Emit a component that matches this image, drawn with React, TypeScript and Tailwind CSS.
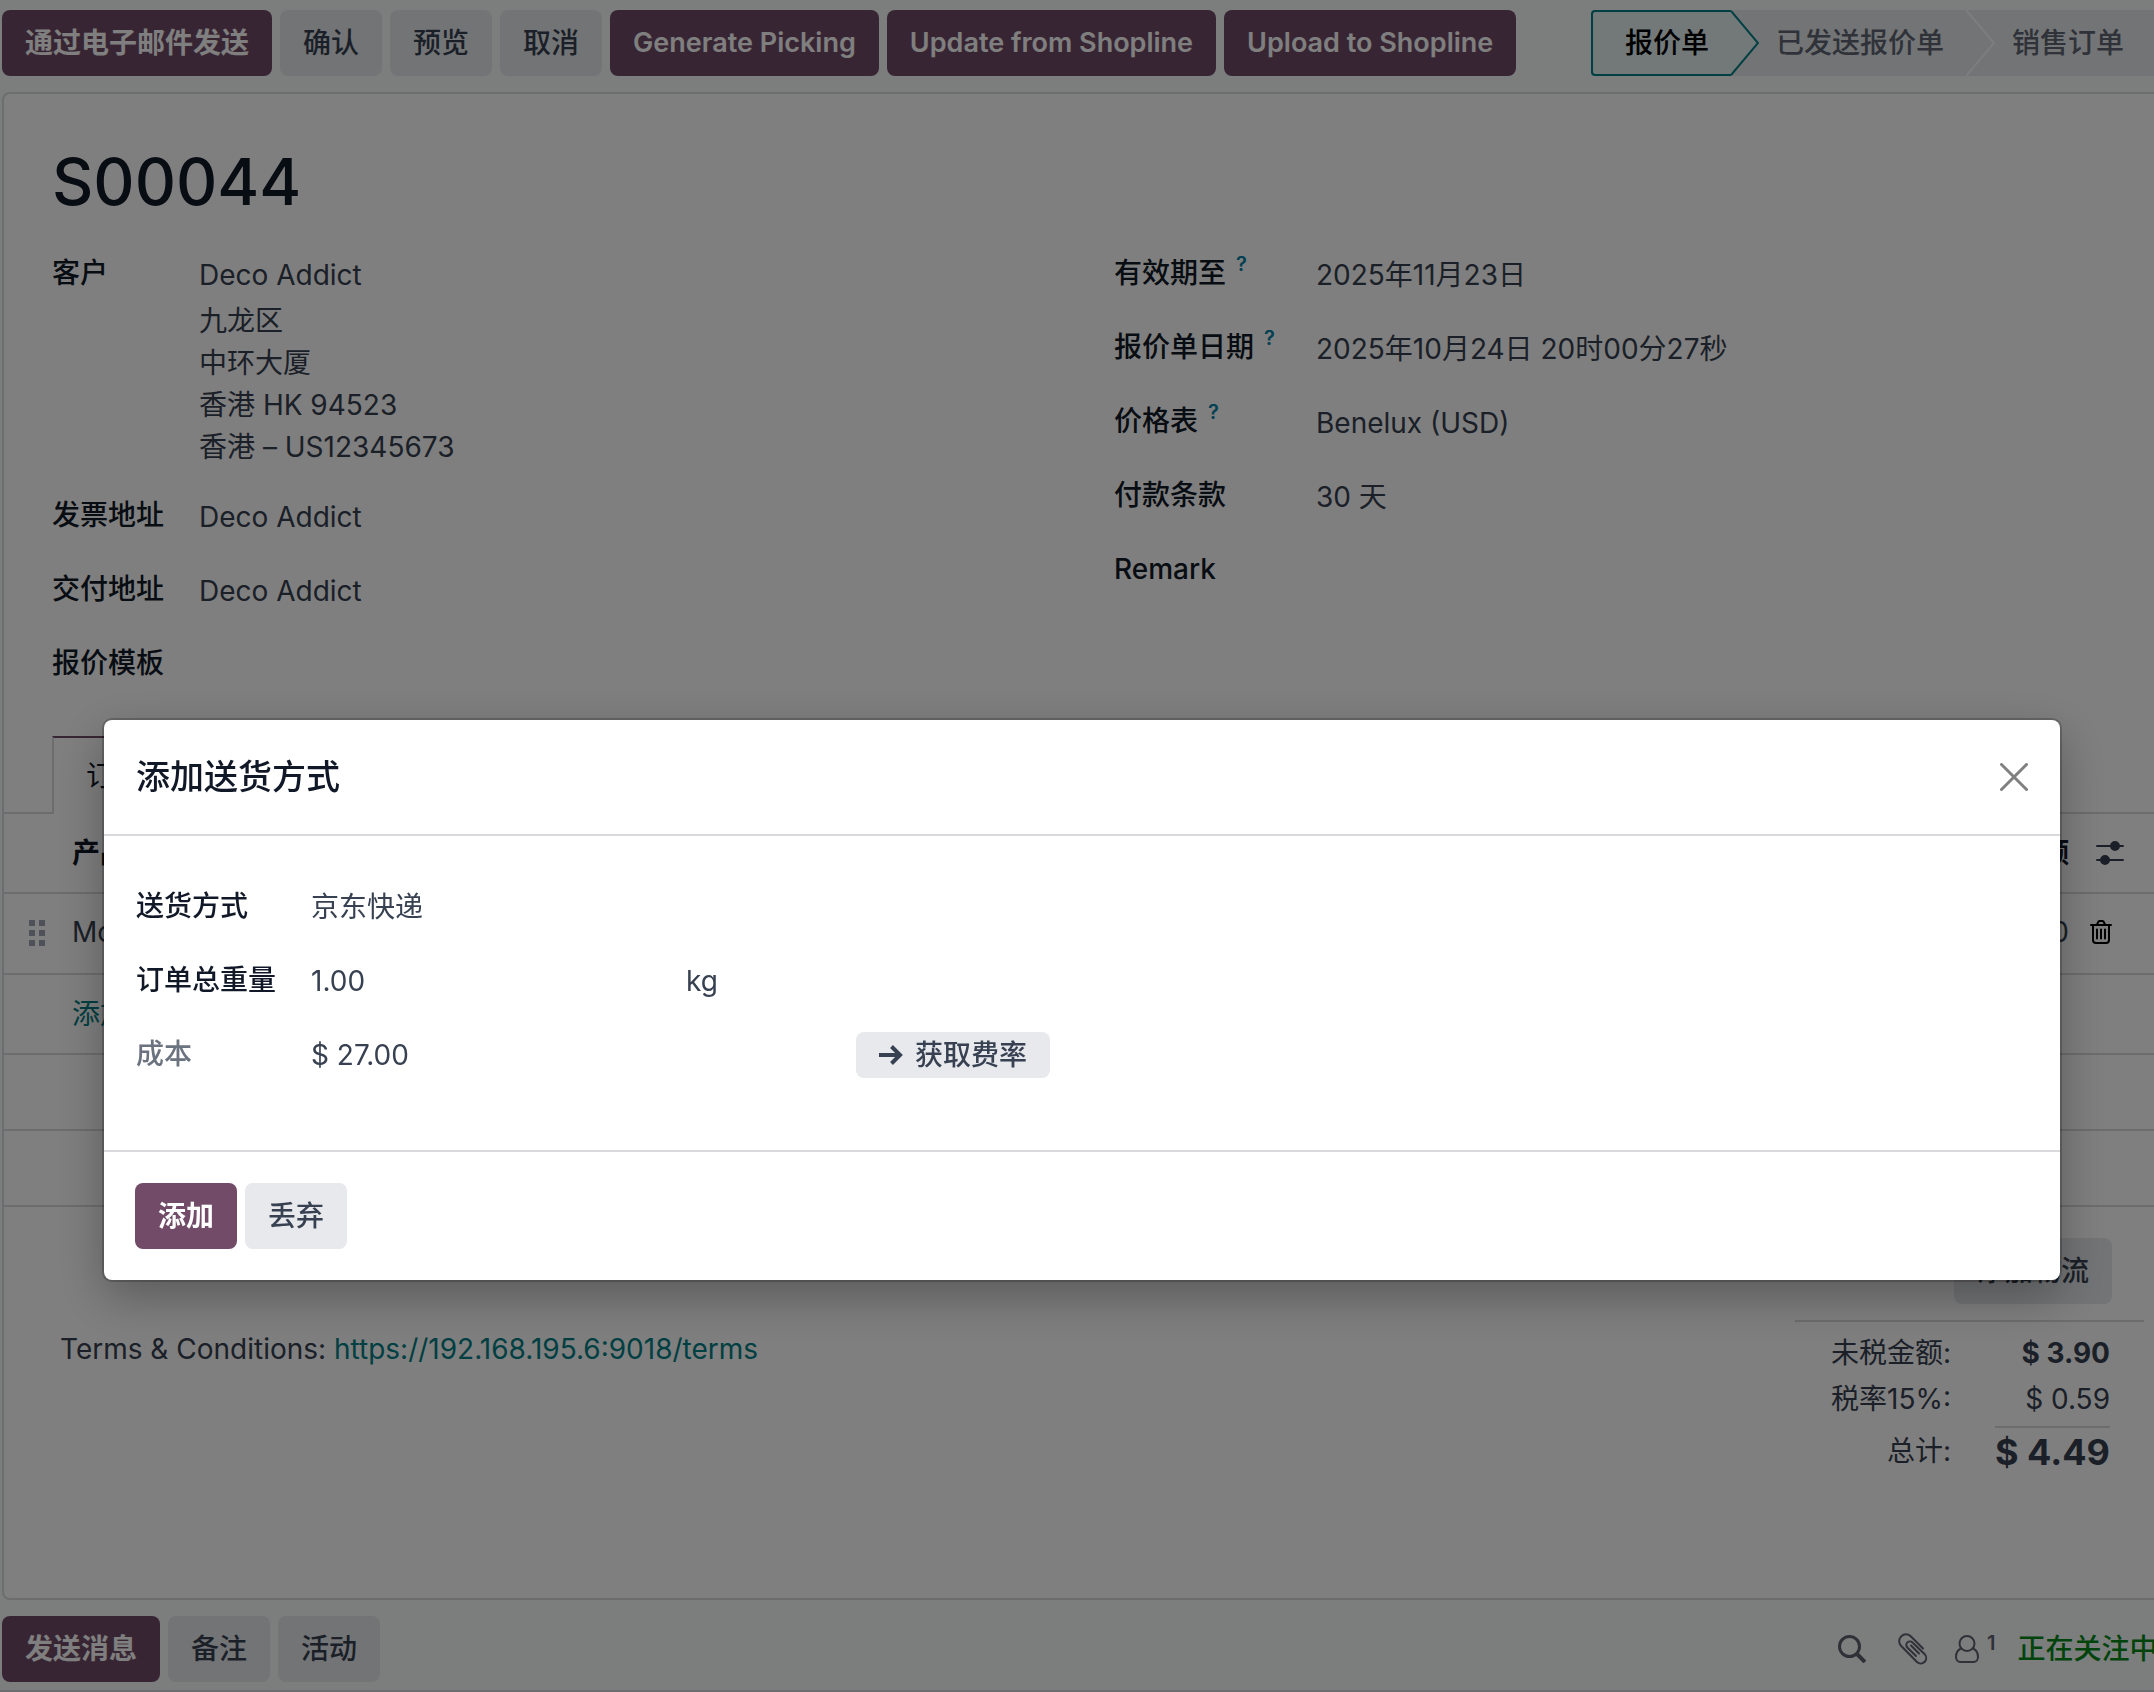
import type { ReactNode } from 'react'
import clsx from 'clsx'

type FieldProps = {
  id: string
  label: string
  value?: string
  help?: boolean
  wide?: boolean
  children?: ReactNode
}

function Button({ primary, latin, children }: { primary?: boolean; latin?: boolean; children: ReactNode }) {
  return (
    <button
      type="button"
      className={clsx(
        'h-[66px] shrink-0 rounded-lg px-[23px] whitespace-nowrap',
        primary ? 'bg-[#714b67] font-semibold text-white' : 'bg-[#e7e9ed] font-medium text-[#374151]',
        latin && 'text-[27px]'
      )}
    >
      {children}
    </button>
  )
}

function Field({ id, label, value = '', help, wide, children }: FieldProps) {
  return (
    <div className={clsx('flex items-start', children ? 'pb-7' : 'pb-8')}>
      <label
        htmlFor={id}
        className={clsx('shrink-0 leading-[38px] font-medium text-[#111827]', wide ? 'w-[202px]' : 'w-[147px]')}
      >
        {label}
        {help && <sup className="-top-3 ml-[10px] text-[20px] font-semibold text-[#0180a5]">?</sup>}
      </label>
      <div className="flex-1">
        <input id={id} defaultValue={value} className="block h-[42px] w-full bg-transparent outline-none" />
        {children}
      </div>
    </div>
  )
}

function ArrowRightIcon() {
  return (
    <svg className="h-6 w-6" viewBox="0 0 24 24" fill="none" stroke="currentColor" strokeWidth={4}>
      <path d="M0 12h21M12.5 3.5l8.5 8.5-8.5 8.5" />
    </svg>
  )
}

function CloseIcon() {
  return (
    <svg className="h-7 w-7" viewBox="0 0 28 28" fill="none" stroke="#808080" strokeWidth={3} strokeLinecap="round">
      <path d="M1.5 1.5l25 25M26.5 1.5l-25 25" />
    </svg>
  )
}

function SlidersIcon() {
  return (
    <svg className="h-6 w-7" viewBox="0 0 28 24" stroke="currentColor" fill="currentColor" strokeWidth={2} strokeLinecap="round">
      <path d="M1 5h26M1 19h26" />
      <circle cx="19" cy="5" r="4" />
      <circle cx="9" cy="19" r="4" />
    </svg>
  )
}

function TrashIcon() {
  return (
    <svg className="h-6 w-[22px]" viewBox="0 0 22 24" fill="none" stroke="currentColor" strokeWidth={2} strokeLinecap="round">
      <path d="M1 5h20M3 5v15a3 3 0 003 3h10a3 3 0 003-3V5M7 4.5l1-2A2 2 0 019.500 1h3A2 2 0 0114 2.500l1 2M7 9.500v9M11 9.500v9M15 9.500v9" />
    </svg>
  )
}

function DragHandle() {
  return (
    <svg className="h-[26px] w-[17px]" viewBox="0 0 17 26" fill="#9ca3af">
      <path d="M0 0h6v6H0zM10 0h6v6h-6zM0 10h6v6H0zM10 10h6v6h-6zM0 20h6v6H0zM10 20h6v6h-6z" />
    </svg>
  )
}

function SearchIcon() {
  return (
    <svg className="h-7 w-7" viewBox="0 0 28 28" fill="none" stroke="currentColor">
      <circle cx="11.500" cy="11.500" r="10" strokeWidth={3} />
      <path d="M18.500 18.500l8.500 8.500" strokeWidth={4} />
    </svg>
  )
}

function PaperclipIcon() {
  return (
    <svg className="h-8 w-[30px]" viewBox="0 0 30 32" fill="none" stroke="currentColor" strokeWidth={2} strokeLinecap="round">
      <path d="M25 15.500L13 3.500A6.800 6.800 0 003 12.800l16 16.200a5.500 5.500 0 008-7.500L14.500 9.500a3.600 3.600 0 00-5.200 5L18 23M21 20.500l-8-8" />
    </svg>
  )
}

function FollowerIcon() {
  return (
    <svg className="h-7 w-6" viewBox="0 0 24 28" fill="none" stroke="currentColor" strokeWidth={2}>
      <circle cx="12" cy="8.500" r="7.500" />
      <path d="M6 13.500C2.500 15 1 18 1 22c0 3 2 5 4.500 5h13c2.500 0 4.500-2 4.500-5 0-4-1.500-7-5-8.500" />
    </svg>
  )
}

function StatusBar() {
  return (
    <div className="flex h-[66px] shrink-0 font-medium whitespace-nowrap text-[#5f6673]">
      <button
        type="button"
        className="rounded-l-sm border-y-2 border-l-2 border-[#017e84] bg-[#e6f2f3] pr-[22px] pl-8 text-black"
      >
        报价单
      </button>
      <svg className="h-full w-7 bg-[#e7e9ed]" viewBox="0 0 28 66" fill="none">
        <path d="M0 1l27 32L0 65z" fill="#e6f2f3" />
        <path d="M0 1l27 32L0 65" stroke="#017e84" strokeWidth={2} />
      </svg>
      <button type="button" className="bg-[#e7e9ed] pr-[22px] pl-[17px]">
        已发送报价单
      </button>
      <svg className="h-full w-[30px] bg-[#e7e9ed]" viewBox="0 0 30 66" fill="none">
        <path d="M0 0l28 33L0 66" stroke="#f9fafb" strokeWidth={2} />
      </svg>
      <button type="button" className="bg-[#e7e9ed] pr-[30px] pl-4">
        销售订单
      </button>
    </div>
  )
}

function OrderLines() {
  return (
    <>
      <div className="flex h-[78px]">
        <div className="w-12 border-b-2 border-[#d8dadd]" />
        <button
          type="button"
          className="border-x-2 border-t-2 border-x-[#d8dadd] border-t-[#714b67] px-8 text-[#111827]"
        >
          订单行
        </button>
        <div className="flex-1 border-b-2 border-[#d8dadd]" />
      </div>
      <table className="w-full border-collapse">
        <thead>
          <tr className="h-[79px] border-b-2 border-[#d8dadd] font-bold text-[#111827]">
            <th className="w-[68px]" />
            <th className="text-left">产品</th>
            <th className="text-right">金额</th>
            <th className="w-[85px] pl-[27px] text-left text-[#374151]">
              <button type="button" aria-label="列" className="block">
                <SlidersIcon />
              </button>
            </th>
          </tr>
        </thead>
        <tbody>
          <tr className="h-[81px] border-b-2 border-[#d8dadd]">
            <td className="pb-[2px] pl-[25px]">
              <DragHandle />
            </td>
            <td className="pb-1">Monitor Stand</td>
            <td className="pb-1 text-right">$ 3.90</td>
            <td className="pb-1 pl-[21px]">
              <button type="button" aria-label="删除" className="block text-black">
                <TrashIcon />
              </button>
            </td>
          </tr>
          <tr className="h-20 border-b-2 border-[#d8dadd]">
            <td />
            <td colSpan={3}>
              <a href="#add" className="text-[#017e84]">
                添加产品
              </a>
            </td>
          </tr>
          <tr className="h-[76px] border-b-2 border-[#d8dadd]">
            <td colSpan={4} />
          </tr>
          <tr className="h-[76px] border-b-2 border-[#d8dadd]">
            <td colSpan={4} />
          </tr>
        </tbody>
      </table>
    </>
  )
}

function Totals() {
  return (
    <div className="mt-4 w-[349px] border-t-2 border-[#d8dadd] pt-2 pr-[34px]">
      <dl className="grid grid-cols-[1fr_auto] gap-x-[44px] text-right">
        <dt className="leading-[46px]">未税金额:</dt>
        <dd className="leading-[46px] font-bold">$ 3.90</dd>
        <dt className="leading-[46px]">税率15%:</dt>
        <dd className="leading-[46px]">$ 0.59</dd>
        <dt className="pt-1 leading-[50px]">总计:</dt>
        <dd className="mt-1 border-t-2 border-[#d8dadd] text-[36px] leading-[48px] font-bold">$ 4.49</dd>
      </dl>
    </div>
  )
}

function Sheet() {
  return (
    <main className="mt-4 ml-[2px] rounded-l-lg border-y-2 border-l-2 border-[#d8dadd] bg-white pb-[122px]">
      <h1 className="mt-12 ml-12 text-[64px] leading-[80px] font-medium text-[#111827]">S00044</h1>
      <div className="mt-8 ml-12 grid grid-cols-2 gap-[22px]">
        <div>
          <Field id="customer" label="客户" value="Deco Addict">
            <address className="mt-1 not-italic">
              九龙区
              <br />
              中环大厦
              <br />
              香港 HK 94523
              <br />
              香港 – US12345673
            </address>
          </Field>
          <Field id="invoice" label="发票地址" value="Deco Addict" />
          <Field id="delivery" label="交付地址" value="Deco Addict" />
          <Field id="template" label="报价模板" />
        </div>
        <div>
          <Field wide help id="expiration" label="有效期至" value="2025年11月23日" />
          <Field wide help id="date" label="报价单日期" value="2025年10月24日 20时00分27秒" />
          <Field wide help id="pricelist" label="价格表" value="Benelux (USD)" />
          <Field wide id="terms" label="付款条款" value="30 天" />
          <Field wide id="remark" label="Remark" />
        </div>
      </div>
      <div className="mt-[18px]">
        <OrderLines />
      </div>
      <div className="flex items-end justify-between pt-[31px] pr-[10px] pl-14">
        <p className="self-start pt-[90px]">
          Terms &amp; Conditions:{' '}
          <a href="https://192.168.195.6:9018/terms" className="text-[#017e84]">
            https://192.168.195.6:9018/terms
          </a>
        </p>
        <div className="flex flex-col items-end">
          <div className="pr-8">
            <Button>添加物流</Button>
          </div>
          <Totals />
        </div>
      </div>
    </main>
  )
}

function Chatter() {
  return (
    <footer className="flex items-center justify-between border-b-2 border-[#d8dadd] pt-4 pb-2 pl-[2px]">
      <div className="flex gap-2">
        <Button primary>发送消息</Button>
        <Button>备注</Button>
        <Button>活动</Button>
      </div>
      <div className="flex h-[66px] w-[316px] shrink-0 items-center whitespace-nowrap text-[#5f6370]">
        <button type="button" aria-label="搜索">
          <SearchIcon />
        </button>
        <button type="button" aria-label="附件" className="ml-8">
          <PaperclipIcon />
        </button>
        <button type="button" aria-label="关注者" className="ml-[27px] flex">
          <FollowerIcon />
          <sup className="top-0 ml-2 text-[20px] leading-4 font-semibold">1</sup>
        </button>
        <button type="button" className="ml-[22px] font-medium text-[#008818]">
          正在关注中
        </button>
      </div>
    </footer>
  )
}

function DeliveryDialog() {
  return (
    <div className="fixed inset-0 flex items-start bg-black/50 pt-[720px] pr-[94px] pl-[104px]">
      <div
        role="dialog"
        aria-labelledby="dialog-title"
        className="w-full rounded-lg bg-white shadow-[0_16px_48px_rgba(0,0,0,0.3)] ring-2 ring-black/20"
      >
        <header className="flex h-[116px] items-center justify-between border-b-2 border-[#d8dadd] px-8">
          <h2 id="dialog-title" className="text-[34px] font-medium text-[#111827]">
            添加送货方式
          </h2>
          <button type="button" aria-label="关闭">
            <CloseIcon />
          </button>
        </header>
        <div className="grid grid-cols-[175px_1fr] gap-y-8 px-8 pt-[50px] pb-[74px]">
          <label htmlFor="carrier" className="leading-[40px] font-medium text-[#111827]">
            送货方式
          </label>
          <select id="carrier" className="h-[42px] w-[480px] appearance-none bg-transparent outline-none">
            <option>京东快递</option>
          </select>
          <label htmlFor="weight" className="leading-[40px] font-medium text-[#111827]">
            订单总重量
          </label>
          <div className="flex">
            <input id="weight" defaultValue="1.00" className="h-[42px] w-[375px] bg-transparent outline-none" />
            <span>kg</span>
          </div>
          <span className="leading-[40px] font-medium text-[#6b7280]">成本</span>
          <div className="flex h-[42px] items-center">
            <span className="w-[545px]">$ 27.00</span>
            <button
              type="button"
              className="flex h-[46px] items-center gap-3 rounded-lg bg-[#e7e9ed] px-[23px] font-medium"
            >
              <ArrowRightIcon />
              获取费率
            </button>
          </div>
        </div>
        <footer className="flex gap-2 border-t-2 border-[#d8dadd] px-[31px] py-[31px]">
          <Button primary>添加</Button>
          <Button>丢弃</Button>
        </footer>
      </div>
    </div>
  )
}

export default function App() {
  return (
    <div className="min-h-screen overflow-x-hidden bg-[#f9fafb] font-[Inter,'Noto_Sans_CJK_SC',sans-serif] text-[28px] leading-[42px] text-[#374151]">
      <div className="flex justify-between gap-4 pt-[10px] pl-[2px]">
        <div className="flex gap-2">
          <Button primary>通过电子邮件发送</Button>
          <Button>确认</Button>
          <Button>预览</Button>
          <Button>取消</Button>
          <Button primary latin>Generate Picking</Button>
          <Button primary latin>Update from Shopline</Button>
          <Button primary latin>Upload to Shopline</Button>
        </div>
        <StatusBar />
      </div>
      <Sheet />
      <Chatter />
      <DeliveryDialog />
    </div>
  )
}
